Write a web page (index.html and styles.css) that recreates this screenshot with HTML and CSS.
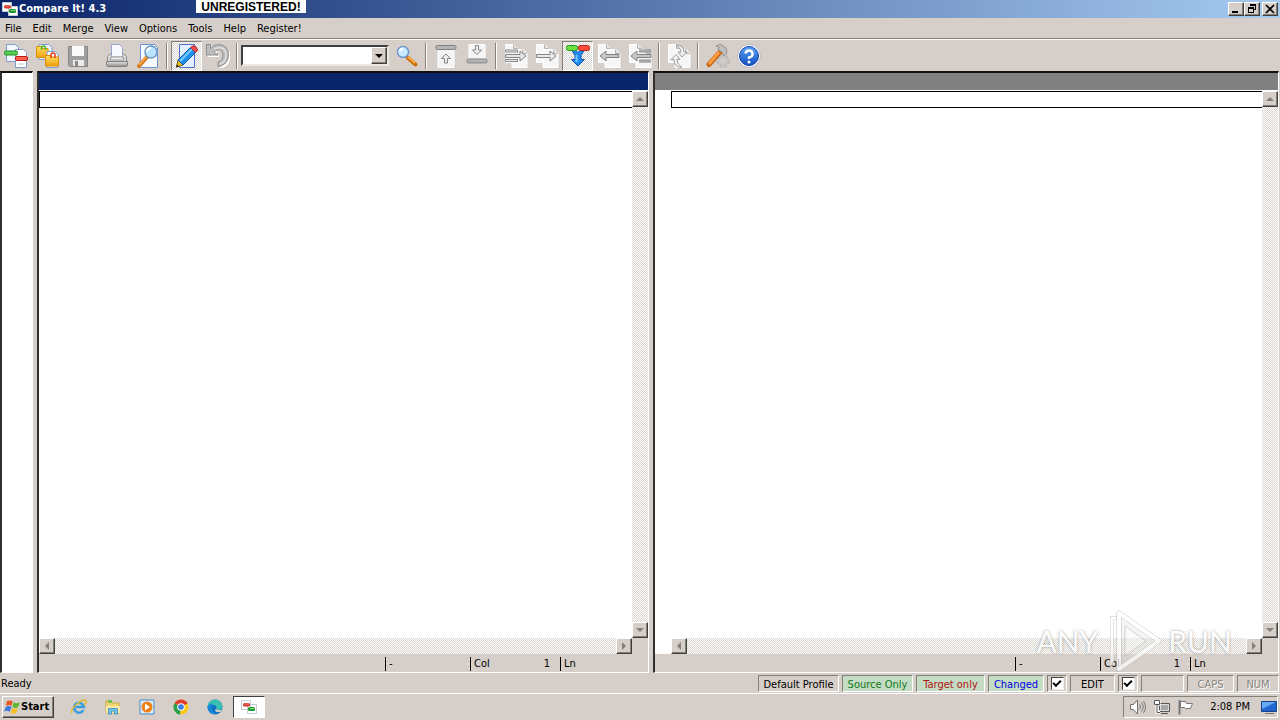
FILE: index.html
```html
<!DOCTYPE html>
<html lang="en">
<head>
<meta charset="utf-8">
<title>Compare It! 4.3</title>
<link rel="stylesheet" href="styles.css">
</head>
<body>
<svg class="defs" aria-hidden="true">
  <defs>
    <linearGradient id="blue" x1="0" y1="0" x2="0" y2="1"><stop offset="0" stop-color="#5aa4f4"/><stop offset="1" stop-color="#1450c0"/></linearGradient>
    <linearGradient id="steel" x1="0" y1="0" x2="0" y2="1"><stop offset="0" stop-color="#e4e4e4"/><stop offset="1" stop-color="#8e8e8e"/></linearGradient>
    <linearGradient id="gold" x1="0" y1="0" x2="0" y2="1"><stop offset="0" stop-color="#ffe060"/><stop offset="1" stop-color="#f0a010"/></linearGradient>
    <symbol id="app" viewBox="0 0 16 16">
      <path d="M.5 1.500h9v9h-9zM6.500 5.500h9v9h-9z" fill="#fff" stroke="#c4ccd4"/>
      <rect x="2" y="4" width="7" height="3.500" rx="1.500" fill="#d83830"/><rect x="7" y="8" width="7" height="4" rx="1.500" fill="#209830"/>
      <path d="M3.500 5h4" stroke="#f08878"/><path d="M9 9.500h4" stroke="#80d880"/>
    </symbol>
    <symbol id="page-right" viewBox="0 0 24 24">
      <path d="M8 5.500h11l4 4v14H8z" fill="#f6f6f6" stroke="#fff"/><path d="M18.500 5.500v4h4.500" fill="#ddd" stroke="#b4b4b4"/>
    </symbol>
    <symbol id="page-left" viewBox="0 0 24 24">
      <path d="M1.500 .5h8l4 4v14h-12z" fill="#f6f6f6" stroke="#fff"/><path d="M9.500 .5v4h4" fill="#ddd" stroke="#b4b4b4"/>
    </symbol>
  </defs>
</svg>

<header class="title-bar">
  <svg class="i16"><use href="#app"/></svg>
  <h1>Compare It! 4.3</h1>
  <span class="unregistered">UNREGISTERED!</span>
  <div class="window-buttons">
    <button type="button" aria-label="Minimize"><svg viewBox="0 0 12 10"><path d="M2 8h6" stroke="#000" stroke-width="2"/></svg></button>
    <button type="button" aria-label="Restore"><svg viewBox="0 0 12 10"><path d="M4 0h6v2H4zM9 2h1v4H8V5h1zM2 3h6v2H2zM2 5h1v3h4V5h1v4H2z" fill="#000"/></svg></button>
    <button type="button" aria-label="Close" class="close"><svg viewBox="0 0 12 10"><path d="M2 1l8 8M10 1L2 9" stroke="#000" stroke-width="1.700"/></svg></button>
  </div>
</header>

<nav class="menu-bar">
  <button type="button">File</button><button type="button">Edit</button><button type="button">Merge</button><button type="button">View</button><button type="button">Options</button><button type="button">Tools</button><button type="button">Help</button><button type="button">Register!</button>
</nav>

<div class="toolbar" role="toolbar" aria-label="Main">
  <button type="button" aria-label="Compare files"><svg viewBox="0 0 24 24">
    <path d="M2.500 .5h9l3 3v14h-12z" fill="#f4f8ff" stroke="#7f9cd0"/><path d="M11.500 5.500h8l3 3v15h-11z" fill="#fff" stroke="#7f9cd0"/>
    <rect x=".5" y="7" width="13" height="4" rx="1.500" fill="#58d058" stroke="#189018"/><rect x="11.500" y="12.500" width="12" height="4" rx="1.500" fill="#ff6050" stroke="#c01818"/><path d="M14 20h6" stroke="#b8c4dc"/></svg></button>
  <button type="button" aria-label="Compare folders"><svg viewBox="0 0 24 24">
    <path d="M4 .5h10l3 3v12H4z" fill="#eef4ff" stroke="#7f9cd0"/><path d="M1.500 5V2.500h5l1 2H13v9H1.500z" fill="url(#gold)" stroke="#d89000"/><path d="M12 7.500h8l3 3v13H12z" fill="#fff" stroke="#7f9cd0"/><path d="M10.500 11.500h5l1 1.500h7v9h-13z" fill="url(#gold)" stroke="#d89000"/><path d="M6.500 6V4a2 2 0 0 1 4 0v2" fill="none" stroke="#48b830" stroke-width="1.500"/><path d="M16 14v-3a2 2 0 0 1 4 0v3" fill="none" stroke="#e03818" stroke-width="1.500"/></svg></button>
  <button type="button" aria-label="Save"><svg viewBox="0 0 24 24">
    <path d="M2.500 2.500h19v20h-18l-1-1z" fill="#a0a0a0" stroke="#858585"/><path d="M6 2h12v10H6z" fill="#fafafa"/><path d="M7 16h11v6H7z" fill="#ececec"/><path d="M9 17h3v5H9z" fill="#888"/></svg></button>
  <span class="gap"></span>
  <button type="button" aria-label="Print"><svg viewBox="0 0 24 24">
    <path d="M2.500 12.500L5 10h14l2.500 2.500v7h-19z" fill="#d8d8d8" stroke="#8c8c8c"/><path d="M6.500 13V.5h8l3 3V13z" fill="#f8faff" stroke="#98a8c8"/><path d="M6 13h12l1 3H5z" fill="#eee" stroke="#999"/><path d="M1.500 17.500h21v4l-1 1h-19l-1-1z" fill="url(#steel)" stroke="#808080"/></svg></button>
  <button type="button" aria-label="Preview"><svg viewBox="0 0 24 24">
    <path d="M4.500 .5h14l3 3v20h-17z" fill="#f6faff" stroke="#7094d8"/><path d="M3 22l8-9" stroke="#d87818" stroke-width="4" stroke-linecap="round"/><path d="M3 21l7-8" stroke="#ffb050" stroke-width="1.500"/><circle cx="15" cy="8" r="6" fill="#b8e4ff" stroke="#7098c0" stroke-width="1.500"/><path d="M11 8a4 4 0 0 1 4-4" fill="none" stroke="#fff" stroke-width="2"/></svg></button>
  <span class="separator"></span>
  <button type="button" aria-label="Edit mode" aria-pressed="true"><svg viewBox="0 0 24 24">
    <path d="M4.500 .5h15v23h-15z" fill="#e4f0ff" stroke="#5070c8"/><path d="M1.500 23L3 16l5 5z" fill="#f0c020" stroke="#806000"/><path d="M3 16L15.500 3.500l5 5L8 21z" fill="#2090e8" stroke="#1058a8"/><path d="M5 17L17 5" stroke="#78ccff" stroke-width="2"/><path d="M15.500 3.500l1-1q3-2 5 1t0 4l-1 1z" fill="#f05050" stroke="#b02030"/><path d="M1 23.500l1-3 2 2z" fill="#222"/></svg></button>
  <button type="button" aria-label="Undo"><svg viewBox="0 0 24 24">
    <path d="M1 1h4v3q3-3 8-3 10 1 10.500 10.500Q23 22 12 23.500V19q6-1 6-7t-5-6q-3 0-4 2l3 3v1H1z" fill="#fff" transform="translate(1 1)"/><path d="M.5 .5h4v4q3-4 8.500-4 9.500 1 9.500 10.500T12 23v-5q5-1 5-6.500T13 6Q9 6 8 8l4 3H.5z" fill="#bdbdbd" stroke="#8e8e8e"/><path d="M8 5q12-4 12 6 0 7-6 9" fill="none" stroke="#dedede" stroke-width="1.500"/></svg></button>
  <span class="separator"></span>
  <div class="combo"><input type="text" aria-label="Find"><button type="button" aria-label="Show list"><i class="arrow down dark"></i></button></div>
  <button type="button" aria-label="Search"><svg viewBox="0 0 24 24">
    <path d="M12.500 13.500l8 7" stroke="#c87010" stroke-width="4" stroke-linecap="round"/><path d="M13 13l7 6" stroke="#ffac40" stroke-width="2"/><circle cx="8" cy="8" r="5.500" fill="#c8ecff" stroke="#7098d0" stroke-width="1.500"/><path d="M4.500 8A3.500 3.500 0 0 1 8 4.500" fill="none" stroke="#fff" stroke-width="2"/></svg></button>
  <span class="separator"></span>
  <button type="button" aria-label="First difference"><svg viewBox="0 0 24 24">
    <path d="M4 4h16v19.500H4z" fill="#f4f4f4" stroke="#fff"/><rect x="2" y="1.500" width="20" height="4" rx="1.500" fill="#b4b4b4" stroke="#808080"/><path d="M12 10l-4.500 4.500h3V19h3v-4.500h3z" fill="#eee" stroke="#858585"/></svg></button>
  <button type="button" aria-label="Last difference"><svg viewBox="0 0 24 24">
    <path d="M4 .5h16V19H4z" fill="#f4f4f4" stroke="#fff"/><path d="M10.500 1.500h3V6h3L12 10.500 7.500 6h3z" fill="#eee" stroke="#858585"/><rect x="2" y="15" width="20" height="4" rx="1.500" fill="#b4b4b4" stroke="#808080"/></svg></button>
  <span class="separator"></span>
  <button type="button" aria-label="Copy all right"><svg viewBox="0 0 24 24">
    <use href="#page-left"/><use href="#page-right"/><path d="M1 7h13M1 16.500h13" stroke="#8a8a8a" stroke-width="3"/><path d="M1.500 7H13M1.500 16.500H13" stroke="#e8e8e8"/><path d="M1.500 10.500H16V7l6 5-6 5v-3.500H1.500z" fill="#e4e4e4" stroke="#858585"/></svg></button>
  <button type="button" aria-label="Copy right"><svg viewBox="0 0 24 24">
    <use href="#page-left"/><use href="#page-right"/><path d="M1.500 10.500H15V7l6 5-6 5v-3.500H1.500z" fill="#e8e8e8" stroke="#858585"/></svg></button>
  <button type="button" aria-label="Merge" aria-pressed="true"><svg viewBox="0 0 24 24">
    <path d="M6 6.500h4l2 2 2-2h4l-3 5v4h3.500L12 22l-6.500-6.500H9v-4z" fill="#208cf0" stroke="#104cac"/><path d="M10.500 11v7" stroke="#70c8ff" stroke-width="2"/><rect x=".5" y="1.500" width="11" height="5" rx="2" fill="#70e040" stroke="#209820"/><rect x="12.500" y="1.500" width="11" height="5" rx="2" fill="#ff5038" stroke="#c01818"/></svg></button>
  <button type="button" aria-label="Copy left"><svg viewBox="0 0 24 24">
    <use href="#page-left"/><use href="#page-right"/><path d="M22 10.500H9V7l-6 5 6 5v-3.500h13z" fill="#c8c8c8" stroke="#808080"/></svg></button>
  <button type="button" aria-label="Copy all left"><svg viewBox="0 0 24 24">
    <use href="#page-left"/><use href="#page-right"/><path d="M11 7h12M11 17h12" stroke="#808080" stroke-width="3"/><path d="M11 7h12M11 17h12" stroke="#ccc"/><path d="M23 10.500H9V7l-6 5 6 5v-3.500h14z" fill="#c8c8c8" stroke="#808080"/></svg></button>
  <span class="separator"></span>
  <button type="button" aria-label="Swap"><svg viewBox="0 0 24 24">
    <use href="#page-left"/><use href="#page-right"/><path d="M9 1q8 0 8 7h3l-5 5-4-5h3q0-4-5-7zM15 23.500q-8 0-8-8H4l5-5 4 5h-3q0 5 5 8z" fill="#efefef" stroke="#a0a0a0"/></svg></button>
  <span class="separator"></span>
  <button type="button" aria-label="Settings"><svg viewBox="0 0 24 24">
    <circle cx="17" cy="17" r="4" fill="none" stroke="#c4c4c4" stroke-width="3"/><circle cx="17" cy="17" r="6" fill="none" stroke="#bcbcbc" stroke-width="2" stroke-dasharray="3 2"/><path d="M3 20.500L14 8" stroke="#c86818" stroke-width="5" stroke-linecap="round"/><path d="M3 20L13 8" stroke="#ff9c40" stroke-width="3"/><path d="M10 2l4-2 6 4 1 5-3 3-2-4-4-2 1-3z" fill="#c0c0c0" stroke="#909090"/></svg></button>
  <button type="button" aria-label="Help"><svg viewBox="0 0 24 24">
    <circle cx="12" cy="12" r="11.500" fill="#fff" stroke="#b4bac8"/><circle cx="12" cy="12" r="9.500" fill="url(#blue)" stroke="#1844a8"/><path d="M8.500 9.500Q9 6.500 12 6.500t3.500 3-3.500 4V15" fill="none" stroke="#fff" stroke-width="2.500"/><circle cx="12" cy="18" r="1.500" fill="#fff"/></svg></button>
</div>

<main class="workspace">
  <aside class="overview"></aside>
  <section class="pane source" aria-label="Source file">
    <div class="pane-title"></div>
    <div class="document"><div class="editor"><div class="current-line"></div></div></div>
    <div class="v-scroll"><button type="button" aria-label="Scroll up"><i class="arrow up"></i></button><button type="button" aria-label="Scroll down"><i class="arrow down"></i></button></div>
    <div class="h-scroll"><button type="button" aria-label="Scroll left"><i class="arrow left"></i></button><button type="button" aria-label="Scroll right"><i class="arrow right"></i></button></div>
    <div class="position"><span class="sign">-</span><span class="col">Col<b>1</b></span><span class="ln">Ln</span></div>
  </section>
  <section class="pane target" aria-label="Target file">
    <div class="pane-title"></div>
    <div class="document"><div class="editor"><div class="current-line"></div></div></div>
    <div class="v-scroll"><button type="button" aria-label="Scroll up"><i class="arrow up"></i></button><button type="button" aria-label="Scroll down"><i class="arrow down"></i></button></div>
    <div class="h-scroll"><button type="button" aria-label="Scroll left"><i class="arrow left"></i></button><button type="button" aria-label="Scroll right"><i class="arrow right"></i></button></div>
    <div class="position"><span class="sign">-</span><span class="col">Col<b>1</b></span><span class="ln">Ln</span></div>
  </section>
</main>

<footer class="status-bar">
  <span class="ready">Ready</span>
  <span class="cell profile">Default Profile</span>
  <span class="cell tint only-source">Source Only</span>
  <span class="cell tint only-target">Target only</span>
  <span class="cell tint changed">Changed</span>
  <label class="cell tick"><input type="checkbox" checked aria-label="Source editable"></label>
  <span class="cell edit">EDIT</span>
  <label class="cell tick"><input type="checkbox" checked aria-label="Target editable"></label>
  <span class="cell blank"></span>
  <span class="cell off caps">CAPS</span>
  <span class="cell off num">NUM</span>
</footer>

<div class="taskbar">
  <button type="button" class="start"><svg viewBox="0 0 18 16"><path d="M3 2q3-2 6 0L8 7q-3-2-6 0z" fill="#e85820"/><path d="M10 3q3 2 7 0l-2 5q-3 2-6 0z" fill="#60b830"/><path d="M2 8q3-2 6 0l-2 5q-3-2-6 0z" fill="#3878e0"/><path d="M9 9q3 2 6 0l-2 5q-3 2-6 0z" fill="#f8c020"/></svg>Start</button>
  <div class="launchers">
    <button type="button" aria-label="Internet Explorer"><svg viewBox="0 0 16 16"><path d="M12.500 11A5 5 0 1 1 13 8H4" fill="none" stroke="#38a0e0" stroke-width="2.500"/><path d="M1 14Q-1 11 6 5T15 2Q16 4 13 6" fill="none" stroke="#e8b828" stroke-width="1.500"/></svg></button>
    <button type="button" aria-label="Explorer"><svg viewBox="0 0 16 16"><path d="M1 2h5l1 2h7v10H1z" fill="#f4d878" stroke="#d0a840"/><path d="M3 1h4v3H3z" fill="#70c050"/><path d="M1 7h14v7H1z" fill="#fbe9a4"/><path d="M3.500 15V9.500h9V15h-3v-3h-3v3z" fill="#78c4e8" stroke="#4898c8"/></svg></button>
    <button type="button" aria-label="Media Player"><svg viewBox="0 0 16 16"><path d="M1 1h14v14H1z" fill="#d8ecfc" stroke="#4888c8"/><circle cx="8" cy="8" r="5.500" fill="#f08010"/><path d="M6 4.500v7l5-3.500z" fill="#fff"/></svg></button>
    <button type="button" aria-label="Chrome"><svg viewBox="0 0 16 16"><circle cx="8" cy="8" r="7.500" fill="#fbc918"/><path d="M8 8L1.500 4.200A7.500 7.500 0 0 1 14.500 4.200z" fill="#e03c30"/><path d="M8 8L1.500 4.200A7.500 7.500 0 0 0 7 15.500z" fill="#2ca04c"/><path d="M8 4.500h6.600L14 3.500 8 3z" fill="#e03c30"/><circle cx="8" cy="8" r="3.800" fill="#fff"/><circle cx="8" cy="8" r="2.800" fill="#3c7ce8"/></svg></button>
    <button type="button" aria-label="Edge"><svg viewBox="0 0 16 16"><circle cx="8" cy="8" r="7.500" fill="#1070c8"/><path d="M.5 8a7.500 7.500 0 0 1 15 0q-.5 3-4 3-3 0-2-2 0-3-3-3-3 0-6 2z" fill="#38c0b0"/><path d="M.5 8q2-4 6-3-3 2-2 5t5 5Q1 16 .5 8z" fill="#1888d8"/><path d="M9.500 9q-1 2 2 2h3.500l-1 1.500q-5 2-6-1z" fill="#d6cfc9"/></svg></button>
  </div>
  <button type="button" class="task" aria-label="Compare It!" aria-pressed="true"><svg class="i16"><use href="#app"/></svg></button>
  <div class="tray">
    <svg viewBox="0 0 16 16"><path d="M.5 5.500h3L7.500 1v14l-4-4.500h-3z" fill="#fff" stroke="#707070"/><path d="M9.500 5.500q2 2.500 0 5M11.500 3.500q3.500 4.500 0 9M13.500 2q4 6 0 12" fill="none" stroke="#777"/></svg>
    <svg viewBox="0 0 16 16"><path d="M5.500 4.500h10v8h-10zM7 14.500h7" fill="#ddd" stroke="#555"/><path d="M7 6h7v5H7z" fill="#a8a8a8"/><path d="M1 1v4h4V1M3 5v8h3" fill="none" stroke="#fff" stroke-width="3"/><path d="M.5 1.500h5v4h-5zM3 5.500v8h3" fill="#fff" stroke="#555"/></svg>
    <svg viewBox="0 0 16 16"><path d="M1.500 1v14.500" stroke="#777" stroke-width="2"/><path d="M2.500 2.500h5l1 2h6l-2 5h-5l-1-1h-4z" fill="#fff" stroke="#777"/></svg>
    <time>2:08 PM</time>
    <svg viewBox="0 0 16 16"><path d="M.5 2.500h15v10H.5z" fill="#2068d0" stroke="#184088"/><path d="M1 3h14L1 10z" fill="#68acf4"/><path d="M4 14.500h9" stroke="#777"/></svg>
  </div>
</div>

<div class="watermark" aria-hidden="true"><span>ANY</span><svg viewBox="0 0 58 62"><path d="M8 56V8h5" fill="none" stroke="#b4b0ac" stroke-width="4"/><path d="M8 55V8h5" fill="none" stroke="#fff" stroke-width="3"/><path d="M15 3L55 31 15 59z" fill="#ddd" fill-opacity=".4" stroke="#b0aca8" stroke-width="5" stroke-linejoin="round"/><path d="M15 3L55 31 15 59z" fill="none" stroke="#fff" stroke-width="4" stroke-linejoin="round"/><path d="M21 16L42 31 21 46z" fill="#fff" fill-opacity=".5" stroke="#c4c0bc"/></svg><span>RUN</span></div>
</body>
</html>
```
FILE: styles.css
```css
:root {
  --face: #d6cfc9;
  --shadow: #848078;
  --ui: "DejaVu Sans Condensed", "Noto Sans", sans-serif;
}
* { box-sizing: border-box; }
body {
  margin: 0;
  height: 100vh;
  display: flex;
  flex-direction: column;
  overflow: hidden;
  background: var(--face);
  color: #000;
  font: 11px/14px var(--ui);
}
button { font: inherit; color: inherit; margin: 0; padding: 0; border: 0; background: none; }
svg { display: block; flex: none; }
.defs { position: absolute; width: 0; height: 0; }
.i16 { width: 16px; height: 16px; }

.title-bar {
  display: flex;
  align-items: center;
  height: 18px;
  padding: 0 2px;
  background: linear-gradient(90deg, #0a246a, #a6caf0);
  color: #fff;
}
.title-bar h1 { margin: 0 0 0 1px; width: 177px; font-size: 11px; line-height: 18px; }
.unregistered {
  align-self: flex-start;
  width: 110px;
  height: 13px;
  background: #fff;
  color: #000;
  text-align: center;
  font: bold 12px/14px "Liberation Sans", sans-serif;
}
.window-buttons { display: flex; margin-left: auto; }
.window-buttons button, .v-scroll button, .h-scroll button, .combo button {
  display: grid;
  place-items: center;
  width: 16px;
  height: 16px;
  background: var(--face);
  border: 1px solid;
  border-color: #fff #404040 #404040 #fff;
  box-shadow: inset -1px -1px var(--shadow);
}
.window-buttons button { height: 14px; }
.window-buttons .close { margin-left: 2px; }
.window-buttons svg { width: 12px; height: 10px; }

.menu-bar {
  display: flex;
  align-items: center;
  gap: 1px;
  height: 21px;
  border-bottom: 1px solid var(--shadow);
}
.menu-bar button { padding: 1px 5px 0; height: 20px; }

.toolbar {
  display: flex;
  align-items: center;
  height: 32px;
  border-top: 1px solid #fff;
}
.toolbar > button { display: grid; place-items: center; width: 31px; height: 30px; }
.toolbar > button svg { width: 24px; height: 24px; }
.toolbar > button[aria-pressed] {
  border: 1px solid;
  border-color: var(--shadow) #fff #fff var(--shadow);
  background: repeating-conic-gradient(#fff 0 25%, #d8d4d0 0 50%) 0 0 / 2px 2px;
}
.gap { width: 8px; }
.separator { width: 8px; height: 26px; display: flex; justify-content: center; }
.separator::before { content: ""; width: 1px; background: var(--shadow); border-right: 1px solid #fff; box-sizing: content-box; background-clip: padding-box; }
.combo {
  display: flex;
  width: 148px;
  height: 21px;
  margin-right: 2px;
  background: #fff;
  border: 2px solid;
  border-color: #404040 #ece8e4 #ece8e4 #404040;
}
.combo input { flex: 1; min-width: 0; border: 0; padding: 0 2px; font: inherit; background: none; }
.combo button { height: 17px; }

.arrow { width: 0; height: 0; border: 4px solid transparent; }
.arrow.up { border-top: 0; border-bottom-color: var(--shadow); }
.arrow.down { border-bottom: 0; border-top-color: var(--shadow); }
.arrow.left { border-left: 0; border-right-color: var(--shadow); }
.arrow.right { border-right: 0; border-left-color: var(--shadow); }
.arrow.dark { border-top-color: #000; }

.workspace {
  flex: 1;
  min-height: 0;
  display: grid;
  grid-template-columns: 33px 612px 1fr;
  column-gap: 4px;
  padding-right: 1px;
}
.overview, .pane { border: solid; border-width: 2px 1px 1px 2px; border-color: #101010 #fff #fff #303030; }
.overview { background: #fff; }
.pane {
  display: grid;
  grid-template: 17px 1px 1fr 16px 18px / 1fr 16px;
}
.pane-title { grid-column: 1 / -1; background: #0a246a; }
.target .pane-title { background: #808080; }
.document { grid-area: 2 / 1 / 4 / 2; background: #fff; padding-top: 1px; }
.current-line { height: 17px; border: 1px solid #000; border-right: 0; }
.v-scroll, .h-scroll {
  display: flex;
  justify-content: space-between;
  background: repeating-conic-gradient(#fff 0 25%, #d8d4ce 0 50%) 0 0 / 2px 2px;
}
.v-scroll { grid-area: 2 / 2 / 4 / 3; flex-direction: column; border-top: 1px solid #fff; }
.h-scroll { grid-area: 4 / 1; }
.target .document { padding-left: 16px; }
.target .h-scroll { border-left: 16px solid #fff; }
.position { grid-area: 5 / 1 / 6 / 3; display: flex; justify-content: flex-end; align-items: center; padding-top: 1px; }
.position span { border-left: 1px solid #000; padding-left: 3px; height: 14px; display: flex; justify-content: space-between; }
.position b { font-weight: normal; padding-right: 10px; }
.sign { width: 85px; }
.col { width: 90px; }
.ln { width: 88px; }

.status-bar { display: flex; align-items: center; gap: 3px; height: 20px; padding: 2px 1px 1px; }
.ready { flex: 1; line-height: 16px; }
.cell {
  height: 17px;
  border: 1px solid;
  border-color: var(--shadow) #fff #fff var(--shadow);
  line-height: 17px;
  text-align: center;
  white-space: nowrap;
}
.profile { width: 81px; }
.only-source { width: 71px; color: #107818; }
.only-target { width: 69px; color: #b01010; }
.changed { width: 56px; color: #0000e0; }
.tint { background: #c4dcc4; }
.tick { width: 20px; display: grid; place-items: center; }
.tick input {
  appearance: none;
  width: 13px;
  height: 13px;
  margin: 0;
  display: grid;
  place-items: center;
  background: #fff;
  border: 1px solid;
  border-color: #404040 #eee #eee #404040;
}
.tick input:checked::before {
  content: "";
  width: 8px;
  height: 5px;
  margin-top: -3px;
  border: solid #000;
  border-width: 0 0 2px 2px;
  box-sizing: border-box;
  rotate: -45deg;
}
.edit { width: 45px; }
.blank { width: 43px; }
.caps { width: 47px; }
.num { width: 42px; }
.off { color: #88847e; text-shadow: 1px 1px #fff; }

.taskbar { display: flex; align-items: center; height: 27px; border-top: 1px solid #fff; padding: 0 2px; }
.start {
  display: flex;
  align-items: center;
  width: 52px;
  height: 22px;
  padding-left: 1px;
  border: 1px solid;
  border-color: #fff #404040 #404040 #fff;
  box-shadow: inset -1px -1px var(--shadow);
  font-weight: bold;
}
.start svg { width: 17px; height: 16px; }
.launchers { display: flex; gap: 18px; margin-left: 17px; }
.launchers svg { width: 16px; height: 16px; }
.task {
  display: grid;
  place-items: center;
  width: 32px;
  height: 22px;
  margin-left: 10px;
  background: #fff;
  border: 1px solid;
  border-color: #404040 #fff #fff #404040;
}
.tray {
  display: flex;
  align-items: center;
  gap: 8px;
  height: 22px;
  margin-left: auto;
  padding: 0 0 0 6px;
  border: 1px solid;
  border-color: var(--shadow) #fff #fff var(--shadow);
}
.tray svg { width: 16px; height: 16px; }
.tray time { margin: 0 3px 0 8px; line-height: 16px; }

.watermark {
  position: absolute;
  right: 48px;
  bottom: 48px;
  display: flex;
  align-items: center;
  gap: 6px;
  opacity: .7;
  pointer-events: none;
  color: #fff;
  font: 30px/28px Lato, sans-serif;
  text-shadow: 0 0 3px #777;
}
.watermark svg { width: 58px; height: 62px; }
```
